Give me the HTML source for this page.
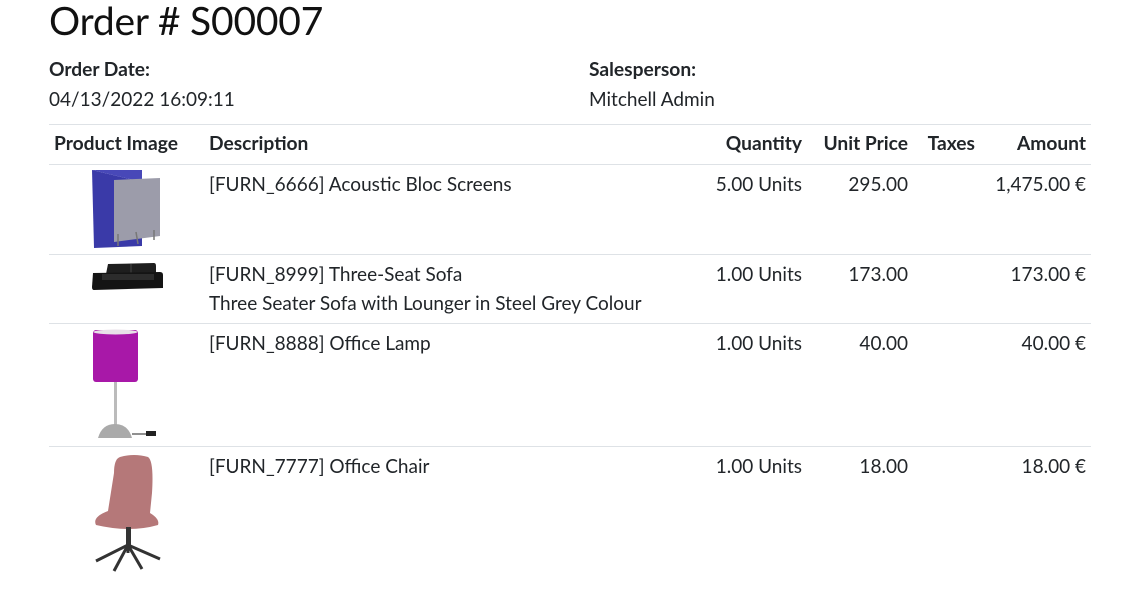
<!DOCTYPE html>
<html><head><meta charset="utf-8"><style>
body{margin:0;width:1132px;height:592px;background:#fff;font-family:"Lato","Liberation Sans",sans-serif;color:#212529;position:relative;overflow:hidden}
.a{position:absolute;white-space:nowrap;line-height:22px}
h1{position:absolute;left:49px;top:-2px;margin:0;font-weight:400;font-size:39px;letter-spacing:-0.2px;color:#111}
.b{font-weight:700;font-size:19.2px}
.t{font-size:19px}
.r{text-align:right}
.hl{position:absolute;left:49px;width:1042px;height:1px;background:#dee2e6}
</style></head><body>
<h1>Order # S00007</h1>
<div class="a b" style="left:49px;top:59px">Order Date:</div>
<div class="a t" style="left:49px;top:89px">04/13/2022 16:09:11</div>
<div class="a b" style="left:589px;top:59px">Salesperson:</div>
<div class="a t" style="left:589px;top:89px">Mitchell Admin</div>
<div class="hl" style="top:124px"></div>
<div class="hl" style="top:164px"></div>
<div class="hl" style="top:254px"></div>
<div class="hl" style="top:323px"></div>
<div class="hl" style="top:446px"></div>
<div class="a b" style="left:54px;top:133px">Product Image</div>
<div class="a b" style="left:209px;top:133px">Description</div>
<div class="a b r" style="right:330px;top:133px">Quantity</div>
<div class="a b r" style="right:224px;top:133px">Unit Price</div>
<div class="a b r" style="right:157px;top:133px">Taxes</div>
<div class="a b r" style="right:46px;top:133px">Amount</div>

<div class="a t" style="left:209px;top:174px">[FURN_6666] Acoustic Bloc Screens</div>
<div class="a t r" style="right:330px;top:174px">5.00 Units</div>
<div class="a t r" style="right:224px;top:174px">295.00</div>
<div class="a t r" style="right:46px;top:174px">1,475.00 €</div>

<div class="a t" style="left:209px;top:264px">[FURN_8999] Three-Seat Sofa</div>
<div class="a t" style="left:209px;top:293px">Three Seater Sofa with Lounger in Steel Grey Colour</div>
<div class="a t r" style="right:330px;top:264px">1.00 Units</div>
<div class="a t r" style="right:224px;top:264px">173.00</div>
<div class="a t r" style="right:46px;top:264px">173.00 €</div>

<div class="a t" style="left:209px;top:333px">[FURN_8888] Office Lamp</div>
<div class="a t r" style="right:330px;top:333px">1.00 Units</div>
<div class="a t r" style="right:224px;top:333px">40.00</div>
<div class="a t r" style="right:46px;top:333px">40.00 €</div>

<div class="a t" style="left:209px;top:456px">[FURN_7777] Office Chair</div>
<div class="a t r" style="right:330px;top:456px">1.00 Units</div>
<div class="a t r" style="right:224px;top:456px">18.00</div>
<div class="a t r" style="right:46px;top:456px">18.00 €</div>

<svg class="a" style="left:88px;top:168px" width="80" height="82">
<polygon points="4,2 54,14 54,78 6,80" fill="#3a3aa8"/>
<polygon points="4,2 54,2 54,14" fill="#4848b8"/>
<polygon points="26,12 72,10 72,68 26,74" fill="#9c9caa"/>
<line x1="30" y1="66" x2="30" y2="78" stroke="#777" stroke-width="1.5"/>
<line x1="48" y1="64" x2="50" y2="76" stroke="#777" stroke-width="1.5"/>
<line x1="66" y1="62" x2="66" y2="72" stroke="#777" stroke-width="1.5"/>
</svg>
<svg class="a" style="left:90px;top:260px" width="75" height="33">
<path d="M18,4 L64,3 Q66,3 66,6 L66,14 L16,14 Z" fill="#1e1e1e"/>
<line x1="41" y1="4" x2="41" y2="14" stroke="#444"/>
<path d="M3,13 L70,12 Q73,12 73,15 L73,28 L4,30 Q2,30 2,27 Z" fill="#141414"/>
<rect x="12" y="14" width="52" height="6" fill="#2c2c2c"/>
</svg>
<svg class="a" style="left:90px;top:328px" width="78" height="114">
<rect x="3" y="2" width="45" height="52" rx="3" fill="#a818a8"/>
<ellipse cx="25.5" cy="4" rx="22" ry="2.5" fill="#e8e0e8"/>
<rect x="24" y="54" width="3" height="44" fill="#bbb"/>
<path d="M8,110 Q12,96 25,96 Q38,96 42,110 Z" fill="#aaa"/>
<path d="M42,106 L58,106" stroke="#222" stroke-width="1"/>
<rect x="56" y="103" width="10" height="5" fill="#222"/>
</svg>
<svg class="a" style="left:90px;top:453px" width="78" height="122">
<path d="M30,4 Q44,0 58,4 Q64,8 62,40 L60,60 Q70,66 68,72 Q40,80 6,72 Q2,64 18,58 L24,20 Q24,6 30,4 Z" fill="#b57879"/>
<rect x="36" y="74" width="5" height="18" fill="#333"/>
<path d="M38,92 L6,108 M38,92 L70,106 M38,92 L24,118 M38,92 L52,116 M38,92 L38,100" stroke="#333" stroke-width="3" fill="none"/>
</svg>
</body></html>
